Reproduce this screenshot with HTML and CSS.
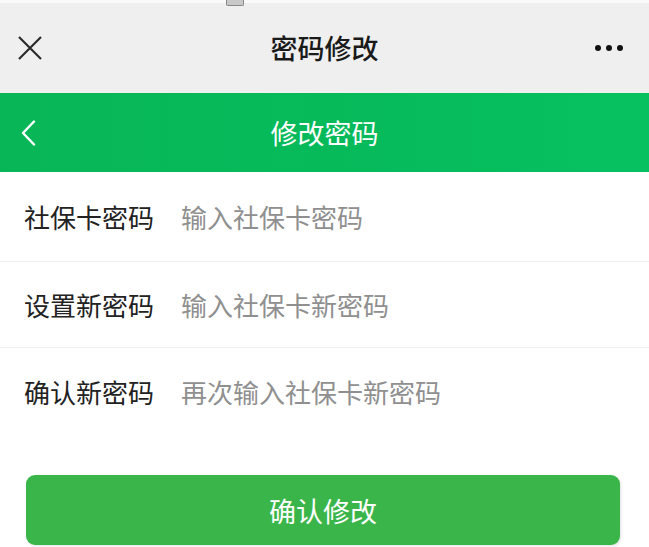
FILE: index.html
```html
<!DOCTYPE html>
<html lang="zh-CN">
<head>
<meta charset="utf-8">
<title>密码修改</title>
<link rel="stylesheet" href="styles.css">
</head>
<body>
<div class="status">
  <span class="status-mark"></span>
</div>
<header class="navbar">
  <span class="nav-close">
    <svg width="26" height="26" viewBox="0 0 26 26"><path d="M2 2 L24 24 M24 2 L2 24" stroke="#2b2b2b" stroke-width="2.2" fill="none"/></svg>
  </span>
  <h1 class="nav-title">密码修改</h1>
  <span class="nav-more"><i></i><i></i><i></i></span>
</header>
<div class="subbar">
  <span class="back">
    <svg width="16" height="26" viewBox="0 0 16 26"><path d="M13 1.5 L2 13 L13 24.5" stroke="#fff" stroke-width="2.4" fill="none" stroke-linecap="round" stroke-linejoin="round"/></svg>
  </span>
  <h2 class="sub-title">修改密码</h2>
</div>
<form class="form">
  <div class="row">
    <label class="label">社保卡密码</label>
    <span class="input">输入社保卡密码</span>
  </div>
  <div class="row">
    <label class="label">设置新密码</label>
    <span class="input">输入社保卡新密码</span>
  </div>
  <div class="row last">
    <label class="label">确认新密码</label>
    <span class="input">再次输入社保卡新密码</span>
  </div>
  <div class="btn-wrap">
    <button type="button" class="btn">确认修改</button>
  </div>
</form>
</body>
</html>
```
FILE: styles.css
```css
* { box-sizing: border-box; }
html, body { margin: 0; padding: 0; background: #fff; }
body {
  width: 649px;
  height: 547px;
  overflow: hidden;
  font-family: "Noto Sans CJK SC", "Noto Sans", sans-serif;
}
.status {
  height: 3px;
  background: #fafafa;
  position: relative;
}
.status-mark {
  position: absolute;
  left: 226px;
  top: 0;
  width: 18px;
  height: 6px;
  border: 1px solid #888;
  border-top: none;
  border-radius: 0 0 2px 2px;
  background: #c8c8c8;
  z-index: 2;
}
.navbar {
  height: 90px;
  background: #efefef;
  display: flex;
  align-items: center;
  justify-content: space-between;
  padding: 0 26px 0 17px;
  position: relative;
}
.nav-close { display: flex; width: 26px; height: 26px; }
.nav-title {
  margin: 0;
  position: absolute;
  left: 0; right: 0;
  text-align: center;
  font-size: 27px;
  font-weight: 500;
  color: #1a1a1a;
  line-height: 90px;
  pointer-events: none;
}
.nav-more { display: flex; gap: 5px; align-items: center; }
.nav-more i {
  display: block;
  width: 6px; height: 6px;
  border-radius: 50%;
  background: #111;
}
.subbar {
  height: 79px;
  background: linear-gradient(90deg, #08b657 0%, #06bb5b 60%, #07c160 100%);
  display: flex;
  align-items: center;
  padding-left: 21px;
  position: relative;
}
.back { display: flex; }
.sub-title {
  margin: 0;
  position: absolute;
  left: 0; right: 0;
  text-align: center;
  font-size: 27px;
  font-weight: 400;
  color: #fff;
  line-height: 79px;
}
.form { margin: 0; }
.row {
  height: 90px;
  display: flex;
  align-items: center;
  padding-left: 24px;
  border-bottom: 1px solid #efefef;
  font-size: 26px;
}
.row + .row { height: 86px; }
.row.last { border-bottom: none; }
.label { color: #222; width: 157px; }
.input { color: #8f8f8f; }
.btn-wrap {
  padding: 41px 29px 0 26px;
}
.btn {
  display: block;
  width: 100%;
  height: 70px;
  border: none;
  border-radius: 9px;
  background: #3ab54a;
  color: #fff;
  font-family: inherit;
  font-size: 27px;
  box-shadow: 1px 1px 3px rgba(0,0,0,0.12);
}
```
